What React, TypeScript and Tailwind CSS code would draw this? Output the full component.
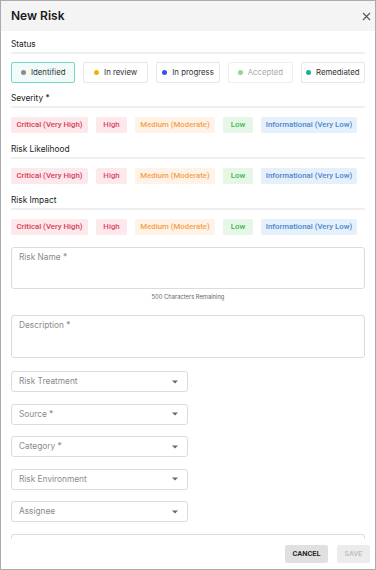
import React from 'react';

const statuses = [
  { label: 'Identified', dot: 'bg-[#8c8c8c]', active: true },
  { label: 'In review', dot: 'bg-[#f5b400]' },
  { label: 'In progress', dot: 'bg-[#3552ee]' },
  { label: 'Accepted', dot: 'bg-[#93d493]', disabled: true },
  { label: 'Remediated', dot: 'bg-[#14b29c]' },
];

const levels = [
  { label: 'Critical (Very High)', cls: 'w-[77px] bg-[#fde8ec] text-[#d93a55]' },
  { label: 'High', cls: 'w-[31px] bg-[#fde8ec] text-[#e0445c]' },
  { label: 'Medium (Moderate)', cls: 'w-[80px] bg-[#fff3e8] text-[#f5a04a]' },
  { label: 'Low', cls: 'w-[30px] bg-[#e7f7e7] text-[#3cb54a]' },
  { label: 'Informational (Very Low)', cls: 'w-[96px] bg-[#e6f0fb] text-[#4a86d0]' },
];

const SectionLabel = ({ text, className }: { text: string; className: string }) => (
  <div className={className}>
    <div className="h-[12px] leading-[12px] text-[8.3px] text-[#222]">{text}</div>
    <div className="mt-[2px] h-[2px] bg-[#efefef]" />
  </div>
);

const LevelRow = () => (
  <div className="mt-[9px] flex gap-[8px] font-['Roboto',sans-serif]">
    {levels.map((l) => (
      <div
        key={l.label}
        className={`h-[16px] rounded-[2px] flex items-center justify-center text-[7.8px] font-medium ${l.cls}`}
      >
        {l.label}
      </div>
    ))}
  </div>
);

const Select = ({ label, className }: { label: string; className: string }) => (
  <div
    className={`h-[21px] w-[177px] border border-[#dcdcdc] rounded-[3px] flex items-center justify-between pl-[7px] pr-[9px] ${className}`}
  >
    <span className="text-[8.3px] text-[#8a8a8a]">{label}</span>
    <svg width="6" height="4" viewBox="0 0 6 4">
      <path d="M0 0.5 L6 0.5 L3 3.5 Z" fill="#666" />
    </svg>
  </div>
);

const App = () => {
  return (
    <div className="w-[376px] h-[570px] border border-[#ababab] bg-white flex flex-col overflow-hidden font-['Inter',sans-serif]">
      {/* Header */}
      <div className="h-[30px] shrink-0 bg-[#f4f4f4] flex items-center justify-between pl-[10px] pr-[4px]">
        <h1 className="text-[12px] font-semibold text-[#1a1a1a]">New Risk</h1>
        <svg width="9" height="9" viewBox="0 0 9 9" className="mt-[1px]">
          <path d="M1 1 L8 8 M8 1 L1 8" stroke="#555" strokeWidth="1.1" />
        </svg>
      </div>

      {/* Body */}
      <div className="flex-1 overflow-hidden px-[10px]">
        <SectionLabel text="Status" className="mt-[7px]" />
        <div className="mt-[8px] flex gap-[8px]">
          {statuses.map((s) => (
            <div
              key={s.label}
              className={`flex-1 h-[21px] rounded-[2px] border flex items-center justify-center gap-[5px] text-[7.8px] ${
                s.active
                  ? 'border-[#72d9c8] bg-[#f1fbf9] text-[#333]'
                  : s.disabled
                  ? 'border-[#efefef] text-[#ababab]'
                  : 'border-[#e6e6e6] text-[#333]'
              }`}
            >
              <span className={`w-[5px] h-[5px] rounded-full ${s.dot}`} />
              {s.label}
            </div>
          ))}
        </div>

        <SectionLabel text="Severity *" className="mt-[9px]" />
        <LevelRow />

        <SectionLabel text="Risk Likelihood" className="mt-[10px]" />
        <LevelRow />

        <SectionLabel text="Risk Impact" className="mt-[10px]" />
        <LevelRow />

        {/* Risk Name */}
        <div className="mt-[12px] h-[42px] border border-[#dcdcdc] rounded-[3px] px-[7px] pt-[3px] text-[8.3px] leading-[12px] text-[#8a8a8a]">
          Risk Name *
        </div>
        <div className="mt-[4px] text-center text-[5.8px] text-[#666] leading-[8px]">500 Characters Remaining</div>

        {/* Description */}
        <div className="mt-[14px] h-[43px] border border-[#dcdcdc] rounded-[3px] px-[7px] pt-[3px] text-[8.3px] leading-[12px] text-[#8a8a8a]">
          Description *
        </div>

        <Select label="Risk Treatment" className="mt-[13px]" />
        <Select label="Source *" className="mt-[11.5px]" />
        <Select label="Category *" className="mt-[11.5px]" />
        <Select label="Risk Environment" className="mt-[11.5px]" />
        <Select label="Assignee" className="mt-[11.5px]" />
        <div className="mt-[12px] h-[40px] border border-[#dcdcdc] rounded-[3px]" />
      </div>

      {/* Footer */}
      <div className="h-[30px] shrink-0 flex items-center justify-end gap-[9px] pr-[5px]">
        <button className="h-[18px] w-[43px] rounded-[2px] bg-[#e0e0e0] text-[7.4px] font-bold text-[#2a2a2a] font-['Roboto',sans-serif]">
          CANCEL
        </button>
        <button className="h-[18px] w-[33px] rounded-[2px] bg-[#ececec] text-[7.4px] font-medium text-[#bdbdbd] font-['Roboto',sans-serif]">
          SAVE
        </button>
      </div>
    </div>
  );
};

export default App;
